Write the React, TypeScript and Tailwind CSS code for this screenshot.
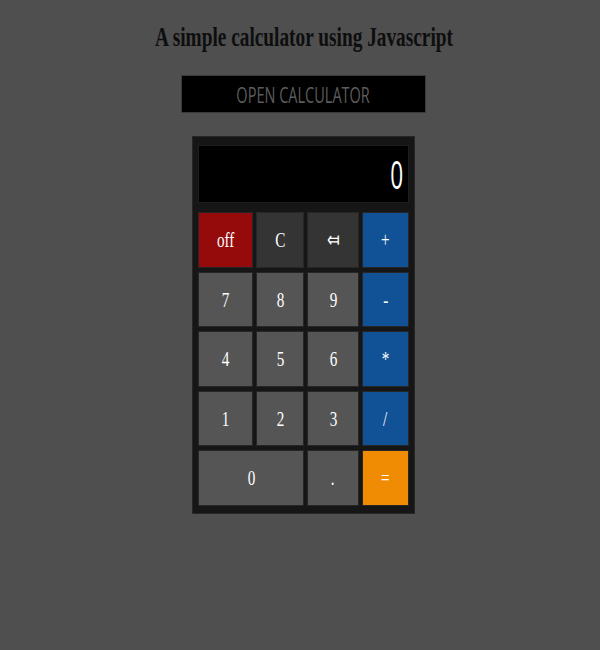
import React from "react";

type Key = { label: string; tone: "red" | "dark" | "gray" | "blue" | "orange"; span?: boolean };

const keys: Key[] = [
  { label: "off", tone: "red" },
  { label: "C", tone: "dark" },
  { label: "⤆", tone: "dark" },
  { label: "+", tone: "blue" },
  { label: "7", tone: "gray" },
  { label: "8", tone: "gray" },
  { label: "9", tone: "gray" },
  { label: "-", tone: "blue" },
  { label: "4", tone: "gray" },
  { label: "5", tone: "gray" },
  { label: "6", tone: "gray" },
  { label: "*", tone: "blue" },
  { label: "1", tone: "gray" },
  { label: "2", tone: "gray" },
  { label: "3", tone: "gray" },
  { label: "/", tone: "blue" },
  { label: "0", tone: "gray", span: true },
  { label: ".", tone: "gray" },
  { label: "=", tone: "orange" },
];

const toneClass: Record<Key["tone"], string> = {
  red: "bg-[#950b0b]",
  dark: "bg-[#343434]",
  gray: "bg-[#555555]",
  blue: "bg-[#115196]",
  orange: "bg-[#f08c04]",
};

export default function App() {
  return (
    <div className="min-h-[650px] w-full bg-[#4f4f4f] pl-[7px] flex flex-col items-center">
      {/* Title */}
      <h1 className="mt-[19px] h-[36px] font-['Liberation_Serif',serif] text-[28px] leading-[36px] font-bold text-[#0e0e0e]">
        <span className="inline-block scale-x-[0.69]">A simple calculator using Javascript</span>
      </h1>

      {/* Open button */}
      <button className="mt-[20px] w-[245px] h-[38px] bg-black border border-[#3a3a3a] flex items-center justify-center font-['Open_Sans',sans-serif] text-[22px] text-[#5c5c5c]">
        <span className="inline-block scale-x-[0.66] whitespace-nowrap">OPEN CALCULATOR</span>
      </button>

      {/* Calculator body */}
      <div className="mt-[23px] w-[223px] bg-[#161616] border border-[#262626] pt-[8px] px-[5px] pb-[7px]">
        <div className="h-[58px] bg-black border border-[#1e1e1e] flex items-center justify-end pr-[5px] font-['Open_Sans',sans-serif] text-[39px] font-medium text-white">
          <span className="inline-block scale-x-[0.58] origin-right">0</span>
        </div>

        <div className="mt-[9px] grid grid-cols-[55px_48px_52px_47px] grid-rows-[repeat(5,55.5px)] gap-x-[3px] gap-y-[4px]">
          {keys.map((k) => (
            <button
              key={k.label}
              className={`${toneClass[k.tone]} ${k.span ? "col-span-2" : ""} border border-[#262626] flex items-center justify-center font-['Liberation_Serif',serif] text-[22px] text-white`}
            >
              <span className="inline-block scale-x-[0.69]">{k.label}</span>
            </button>
          ))}
        </div>
      </div>
    </div>
  );
}
